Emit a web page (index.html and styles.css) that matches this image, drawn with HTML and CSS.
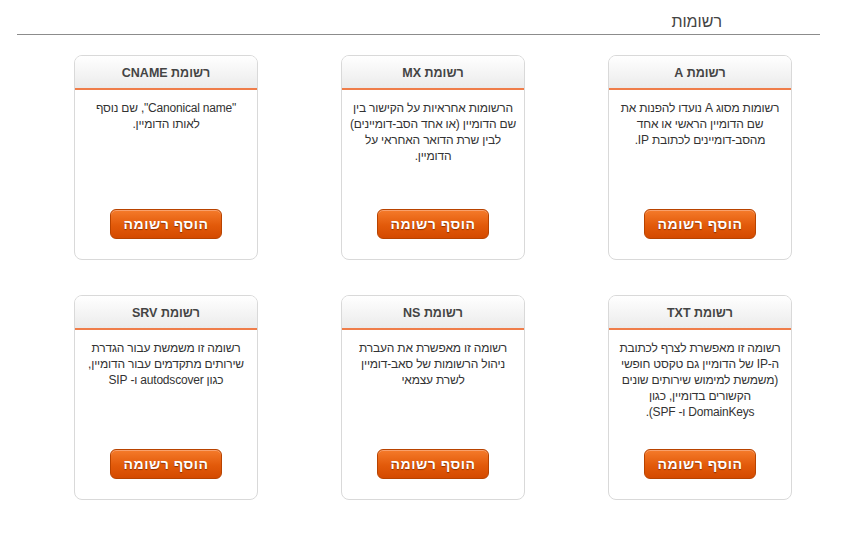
FILE: index.html
```
<!DOCTYPE html>
<html lang="he" dir="rtl">
<head>
<meta charset="utf-8">
<title>רשומות</title>
<link rel="stylesheet" href="styles.css">
</head>
<body>

<div class="page">
    <h1 class="page_title">רשומות</h1>

    <div class="records">

        <div class="record_card">
            <div class="card_head">רשומת A</div>
            <p class="card_text">רשומות מסוג A נועדו להפנות את<br>שם הדומיין הראשי או אחד<br>מהסב-דומיינים לכתובת IP.</p>
            <button class="add_btn" type="button">הוסף רשומה</button>
        </div>

        <div class="record_card">
            <div class="card_head">רשומת MX</div>
            <p class="card_text">הרשומות אחראיות על הקישור בין<br>שם הדומיין (או אחד הסב-דומיינים)<br>לבין שרת הדואר האחראי על<br>הדומיין.</p>
            <button class="add_btn" type="button">הוסף רשומה</button>
        </div>

        <div class="record_card">
            <div class="card_head">רשומת CNAME</div>
            <p class="card_text">"Canonical name", שם נוסף<br>לאותו הדומיין.</p>
            <button class="add_btn" type="button">הוסף רשומה</button>
        </div>

        <div class="record_card">
            <div class="card_head">רשומת TXT</div>
            <p class="card_text">רשומה זו מאפשרת לצרף לכתובת<br>ה-IP של הדומיין גם טקסט חופשי<br>(משמשת למימוש שירותים שונים<br>הקשורים בדומיין, כגון<br>DomainKeys ו- SPF).</p>
            <button class="add_btn" type="button">הוסף רשומה</button>
        </div>

        <div class="record_card">
            <div class="card_head">רשומת NS</div>
            <p class="card_text">רשומה זו מאפשרת את העברת<br>ניהול הרשומות של סאב-דומיין<br>לשרת עצמאי</p>
            <button class="add_btn" type="button">הוסף רשומה</button>
        </div>

        <div class="record_card">
            <div class="card_head">רשומת SRV</div>
            <p class="card_text">רשומה זו משמשת עבור הגדרת<br>שירותים מתקדמים עבור הדומיין,<br>כגון autodscover ו- SIP</p>
            <button class="add_btn" type="button">הוסף רשומה</button>
        </div>

    </div>
</div>

</body>
</html>
```

FILE: styles.css
```
body{
    margin: 0;
    background-color: #FFFFFF;
    font-family: "Liberation Sans", Arial, sans-serif;
    color: #333333;
}

.page{
    padding: 12px 29px 0 17px;
}

.page_title{
    margin: 0;
    padding: 0 98px 3px 0;
    font-size: 16px;
    font-weight: normal;
    line-height: 19px;
    color: #444444;
    border-bottom: 1px solid #8c8c8c;
}

.records{
    display: grid;
    grid-template-columns: repeat(3, 184px);
    column-gap: 83px;
    row-gap: 35px;
    margin-top: 20px;
    padding-right: 28px;
}

.record_card{
    display: flex;
    flex-direction: column;
    align-items: center;
    height: 205px;
    box-sizing: border-box;
    border: 1px solid #d9d9d9;
    border-radius: 8px;
    background-color: #FFFFFF;
    overflow: hidden;
}

.card_head{
    align-self: stretch;
    height: 32px;
    line-height: 34px;
    text-align: center;
    font-size: 12.5px;
    font-weight: bold;
    color: #444444;
    background: linear-gradient(#ffffff, #ebebeb);
    border-bottom: 2px solid #ef7d4a;
}

.card_text{
    margin: 10px 0 0 0;
    padding: 0 4px;
    font-size: 12px;
    line-height: 16px;
    text-align: center;
    white-space: nowrap;
    letter-spacing: -0.2px;
    color: #333333;
}

.add_btn{
    margin-top: auto;
    margin-bottom: 20px;
    width: 112px;
    height: 30px;
    border: 1px solid #b84300;
    border-radius: 6px;
    background: linear-gradient(#f57b2b, #e25a0a 55%, #d44a00);
    box-shadow: inset 0 1px 0 #f9a06b;
    color: #FFFFFF;
    font-family: "Liberation Sans", Arial, sans-serif;
    font-size: 14px;
    font-weight: bold;
    letter-spacing: 0.5px;
    text-shadow: 0 1px 1px #8a3000;
    cursor: pointer;
}
```
